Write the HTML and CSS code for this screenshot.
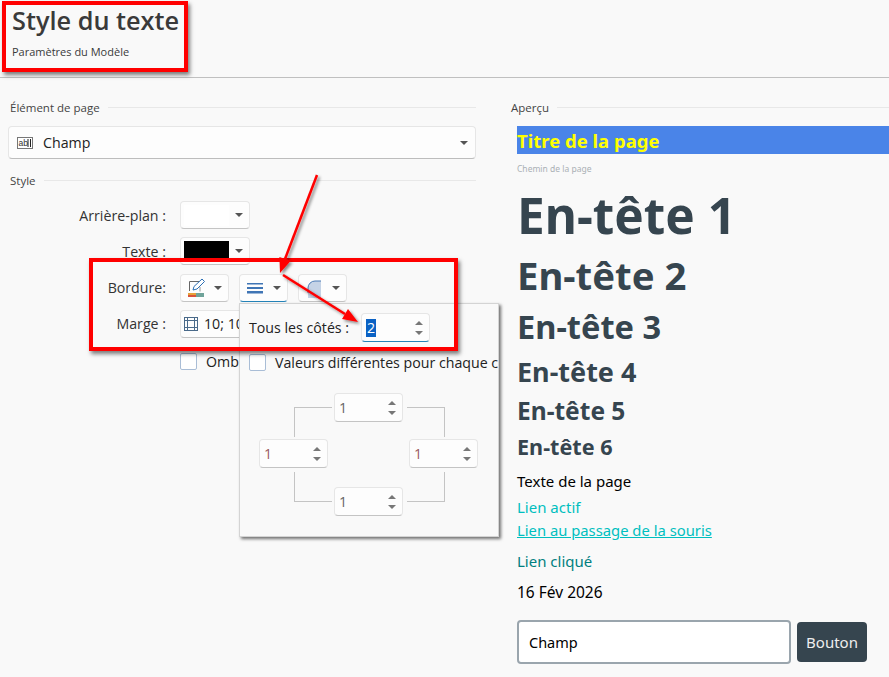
FILE: index.html
```html
<!DOCTYPE html>
<html lang="fr">
<head>
  <meta charset="UTF-8">
  <title>Style du texte</title>
  <link rel="stylesheet" href="styles.css">
</head>
<body>

  <header class="top">
    <h1 class="top-title">Style du texte</h1>
    <div class="top-sub">Paramètres du Modèle</div>
  </header>

  <main class="columns">
    <section class="left">
      <div class="legend"><span>Élément de page</span></div>
      <div class="combo">
        <svg class="abl" width="16" height="12" viewBox="0 0 16 12"><rect x="0.500" y="0.500" width="15" height="11" fill="#fff" stroke="#777"/><text x="1.500" y="9" font-size="8.500" font-family="Liberation Sans" fill="#333">ab</text><path d="M11 2v8M13.500 2v8" stroke="#222" fill="none"/></svg>
        <span class="combo-text">Champ</span>
        <i class="caret"></i>
      </div>

      <div class="legend legend-style"><span>Style</span></div>
      <div class="form">
        <label class="form-label">Arrière-plan :</label>
        <div class="form-row"><div class="btn btn-color"><span class="swatch swatch-white"></span><i class="caret"></i></div></div>

        <label class="form-label">Texte :</label>
        <div class="form-row"><div class="btn btn-color"><span class="swatch swatch-black"></span><i class="caret"></i></div></div>

        <label class="form-label">Bordure:</label>
        <div class="form-row">
          <div class="btn btn-icon">
            <svg width="20" height="20" viewBox="0 0 20 20"><path d="M2.500 13V3.500H13" fill="none" stroke="#666"/><path d="M13 13.500V9" fill="none" stroke="#999"/><path d="M6 12l1-3.500L15 1l2.500 2.500L10 11z" fill="#fff" stroke="#2b6fb5"/><rect x="1" y="15" width="8" height="2" fill="#e8a33a"/><rect x="1" y="17" width="8" height="2" fill="#d9533a"/><rect x="9" y="15" width="8" height="4" fill="#6fa39a"/></svg>
            <i class="caret"></i>
          </div>
          <div class="btn btn-icon btn-active">
            <svg width="18" height="12" viewBox="0 0 18 12"><rect x="1" y="1" width="16" height="1.500" fill="#3f75b5"/><rect x="1" y="5" width="16" height="2" fill="#3f75b5"/><rect x="1" y="9" width="16" height="2.500" fill="#3f75b5"/></svg>
            <i class="caret"></i>
          </div>
          <div class="btn btn-icon">
            <svg width="18" height="20" viewBox="0 0 18 20"><path d="M3 20V10a7 7 0 0 1 7-7h6v17z" fill="#c5d3e6"/><path d="M3 15V10a7 7 0 0 1 7-7h6" fill="none" stroke="#4a7ab5"/></svg>
            <i class="caret"></i>
          </div>
        </div>

        <label class="form-label">Marge :</label>
        <div class="form-row">
          <div class="btn btn-margin">
            <svg width="14" height="14" viewBox="0 0 14 14"><rect x="0.500" y="0.500" width="13" height="13" fill="none" stroke="#4a6a8a"/><path d="M3.500 0v14M10.500 0v14M0 3.500h14M0 10.500h14" stroke="#4a6a8a"/></svg>
            <span>10; 10</span>
          </div>
        </div>

        <div></div>
        <div class="form-row check-row"><span class="check"></span><span>Ombre</span></div>
      </div>
    </section>

    <section class="right">
      <div class="legend legend-right"><span>Aperçu</span></div>
      <div class="preview">
        <div class="pv-title">Titre de la page</div>
        <div class="pv-path">Chemin de la page</div>
        <div class="pv-h pv-h1">En-tête 1</div>
        <div class="pv-h pv-h2">En-tête 2</div>
        <div class="pv-h pv-h3">En-tête 3</div>
        <div class="pv-h pv-h4">En-tête 4</div>
        <div class="pv-h pv-h5">En-tête 5</div>
        <div class="pv-h pv-h6">En-tête 6</div>
        <div class="pv-text">Texte de la page</div>
        <div class="pv-link">Lien actif</div>
        <div class="pv-link pv-hover">Lien au passage de la souris</div>
        <div class="pv-visited">Lien cliqué</div>
        <div class="pv-date">16 Fév 2026</div>
        <div class="pv-form">
          <div class="pv-input">Champ</div>
          <div class="pv-button">Bouton</div>
        </div>
      </div>
    </section>
  </main>

  <!-- popup du bouton bordure -->
  <div class="popup">
    <div class="popup-row">
      <span>Tous les côtés :</span>
      <div class="spin spin-main"><span class="spin-value"><span class="selected">2</span></span><i class="arrows"></i></div>
    </div>
    <div class="popup-check"><span class="check"></span><span class="popup-check-text">Valeurs différentes pour chaque côté</span></div>
    <div class="sides">
      <div class="corner corner-tl"></div>
      <div class="corner corner-tr"></div>
      <div class="corner corner-bl"></div>
      <div class="corner corner-br"></div>
      <div class="spin spin-side side-top"><span class="spin-value">1</span><i class="arrows"></i></div>
      <div class="spin spin-side side-left"><span class="spin-value">1</span><i class="arrows"></i></div>
      <div class="spin spin-side side-right"><span class="spin-value">1</span><i class="arrows"></i></div>
      <div class="spin spin-side side-bottom"><span class="spin-value">1</span><i class="arrows"></i></div>
    </div>
  </div>

  <!-- annotations rouges -->
  <div class="mark mark-title"></div>
  <div class="mark mark-border"></div>
  <svg class="arrows-layer" width="889" height="677" viewBox="0 0 889 677">
    <defs>
      <filter id="sh" x="-20%" y="-20%" width="140%" height="140%"><feDropShadow dx="2" dy="2" stdDeviation="1.500" flood-color="#000" flood-opacity="0.45"/></filter>
    </defs>
    <g filter="url(#sh)" fill="#f00" stroke="#f00">
      <path d="M317 175L285 259" fill="none" stroke-width="2.500"/>
      <path d="M280 273L279.400 257L290.600 261z" stroke="none"/>
      <path d="M283 275L345 314" fill="none" stroke-width="2.500"/>
      <path d="M358 322L342 319L348 309z" stroke="none"/>
    </g>
  </svg>

</body>
</html>
```

FILE: styles.css
```css
html, body {
  margin: 0;
  height: 100%;
}

body {
  position: relative;
  width: 889px;
  height: 677px;
  overflow: hidden;
  background: #f9f9f9;
  color: #222;
  font-family: 'Open Sans', 'Noto Sans', sans-serif;
  font-size: 14.200px;
}

.top {
  height: 78px;
  box-sizing: border-box;
  padding: 3px 0 0 12px;
  border-bottom: 1px solid #c0c0c0;
}

.top-title {
  margin: 0;
  font-size: 25.300px;
  font-weight: 600;
  line-height: 34px;
  color: #3a3a3a;
}

.top-sub {
  margin-top: 7px;
  font-size: 11px;
  line-height: 16px;
  color: #3a3a3a;
}

.columns {
  display: flex;
}

.left {
  width: 476px;
  box-sizing: border-box;
  padding: 20px 0 0 8px;
}

.right {
  flex: 1;
  padding: 20px 0 0 35px;
}

.legend {
  display: flex;
  align-items: center;
  gap: 8px;
  height: 18px;
  padding-left: 2px;
  font-size: 11.500px;
  color: #444;
}

.legend::after {
  content: '';
  flex: 1;
  height: 1px;
  background: #e8e8e8;
}

.legend-style {
  margin-top: 12px;
}

.legend-right {
  padding-left: 0;
}

.combo {
  display: flex;
  align-items: center;
  height: 33px;
  box-sizing: border-box;
  margin-top: 10px;
  padding: 0 7px 0 8px;
  background: #fdfdfd;
  border: 1px solid #e6e6e6;
  border-bottom-color: #bdbdbd;
  border-radius: 4px;
}

.abl {
  margin-right: 10px;
}

.combo-text {
  flex: 1;
}

.caret {
  display: inline-block;
  width: 0;
  height: 0;
  border-left: 4px solid transparent;
  border-right: 4px solid transparent;
  border-top: 4px solid #555;
}

.form {
  display: grid;
  grid-template-columns: 158px 1fr;
  grid-auto-rows: 28px;
  row-gap: 8.300px;
  margin-top: 12px;
  align-items: center;
}

.form-label {
  text-align: right;
  color: #333;
}

.form-row {
  display: flex;
  align-items: center;
  gap: 10px;
  margin-left: 14px;
}

.btn {
  display: flex;
  align-items: center;
  height: 28px;
  box-sizing: border-box;
  background: #fdfdfd;
  border: 1px solid #e6e6e6;
  border-bottom-color: #c4c4c4;
  border-radius: 4px;
}

.btn-color {
  width: 70px;
  padding: 0 6px 0 3px;
  justify-content: space-between;
}

.swatch {
  width: 45px;
  height: 21px;
}

.swatch-white {
  background: #fff;
}

.swatch-black {
  background: #000;
}

.btn-icon {
  width: 49px;
  padding: 0 6px;
  justify-content: space-between;
}

.btn-active {
  border-bottom-color: #2583b8;
}

.btn-margin {
  width: 120px;
  padding: 0 3px;
  gap: 6px;
  white-space: nowrap;
  overflow: hidden;
}

.check-row {
  gap: 9px;
  margin-top: 3px;
}

.check {
  flex: none;
  width: 15px;
  height: 15px;
  background: #fff;
  border: 1px solid #a9bdd6;
  border-radius: 2px;
}

/* apercu */

.preview {
  margin-top: 10px;
  margin-left: 6px;
  font-family: 'Noto Sans', sans-serif;
  font-size: 15px;
  color: #000;
}

.pv-title {
  height: 28px;
  line-height: 29px;
  background: #4a84e8;
  color: #ff0;
  font-size: 18.500px;
  font-weight: bold;
}

.pv-path {
  margin-top: 9px;
  font-size: 8.500px;
  line-height: 11px;
  color: #aab0b5;
}

.pv-h {
  color: #36454f;
  font-weight: bold;
}

.pv-h1 {
  margin-top: 14px;
  font-size: 49.500px;
  line-height: 54px;
}

.pv-h2 {
  margin-top: 12px;
  font-size: 38.300px;
  line-height: 42px;
}

.pv-h3 {
  margin-top: 13px;
  font-size: 32.600px;
  line-height: 36px;
}

.pv-h4 {
  margin-top: 12px;
  font-size: 27px;
  line-height: 30px;
}

.pv-h5 {
  margin-top: 11px;
  font-size: 24.500px;
  line-height: 26px;
}

.pv-h6 {
  margin-top: 11px;
  font-size: 21.600px;
  line-height: 24px;
}

.pv-text {
  margin-top: 12px;
  line-height: 20px;
}

.pv-link {
  margin-top: 6px;
  line-height: 20px;
  color: #00bfbf;
}

.pv-hover {
  margin-top: 3px;
  font-size: 14.800px;
  text-decoration: underline;
}

.pv-visited {
  margin-top: 11px;
  line-height: 20px;
  color: #008080;
}

.pv-date {
  margin-top: 11px;
  font-size: 15.500px;
  line-height: 20px;
}

.pv-form {
  display: flex;
  align-items: center;
  gap: 6px;
  margin-top: 18px;
}

.pv-input {
  width: 274px;
  height: 44px;
  box-sizing: border-box;
  padding-left: 10px;
  line-height: 40px;
  font-size: 14.500px;
  background: #fff;
  border: 2px solid #9aa5ad;
  border-radius: 4px;
}

.pv-button {
  width: 70px;
  height: 40px;
  line-height: 40px;
  font-size: 15px;
  text-align: center;
  background: #36454f;
  color: #eee;
  border-radius: 4px;
}

/* popup */

.popup {
  position: absolute;
  left: 239px;
  top: 303px;
  width: 260px;
  height: 234px;
  box-sizing: border-box;
  padding: 9px 0 0 9px;
  overflow: hidden;
  background: #f9f9f9;
  border: 1px solid #d4d4d4;
  box-shadow: 2px 2px 3px rgba(0, 0, 0, 0.55);
}

.popup-row {
  display: flex;
  align-items: center;
  gap: 12px;
}

.spin {
  display: flex;
  align-items: center;
  justify-content: space-between;
  width: 69px;
  height: 29px;
  box-sizing: border-box;
  padding: 0 6px 0 4px;
  background: #fdfdfd;
  border: 1px solid #e6e6e6;
  border-bottom-color: #c4c4c4;
  border-radius: 4px;
}

.spin-main {
  border-bottom-color: #2583b8;
}

.selected {
  display: inline-block;
  line-height: 18px;
  padding: 0 1px;
  background: #0b62c4;
  color: #fff;
}

.arrows {
  position: relative;
  width: 8px;
  height: 14px;
}

.arrows::before, .arrows::after {
  content: '';
  position: absolute;
  left: 0;
  border-left: 4px solid transparent;
  border-right: 4px solid transparent;
}

.arrows::before {
  top: 0;
  border-bottom: 4px solid #777;
}

.arrows::after {
  bottom: 0;
  border-top: 4px solid #777;
}

.popup-check {
  display: flex;
  align-items: center;
  gap: 9px;
  margin-top: 11px;
  white-space: nowrap;
}

/* schema des quatre cotes */

.sides {
  position: relative;
  width: 220px;
  height: 123px;
  margin: 21px 0 0 10px;
}

.corner {
  position: absolute;
  width: 37px;
  height: 29px;
  border: 0 solid #c4c4c4;
}

.corner-tl {
  left: 35px;
  top: 14px;
  border-width: 1px 0 0 1px;
}

.corner-tr {
  left: 148px;
  top: 14px;
  border-width: 1px 1px 0 0;
}

.corner-bl {
  left: 35px;
  top: 79px;
  border-width: 0 0 1px 1px;
}

.corner-br {
  left: 148px;
  top: 79px;
  border-width: 0 1px 1px 0;
}

.spin-side {
  position: absolute;
  color: #666;
}

.side-top {
  left: 75px;
  top: 0;
}

.side-left {
  left: 0;
  top: 46px;
  color: #9a5a60;
}

.side-right {
  left: 150px;
  top: 46px;
  color: #9a5a60;
}

.side-bottom {
  left: 75px;
  top: 94px;
}

/* annotations */

.mark {
  position: absolute;
  box-sizing: border-box;
  border: 4px solid #f00;
  box-shadow: 2px 3px 4px rgba(0, 0, 0, 0.5);
}

.mark-title {
  left: 2px;
  top: 1px;
  width: 186px;
  height: 71px;
}

.mark-border {
  left: 89px;
  top: 258px;
  width: 369px;
  height: 93px;
}

.arrows-layer {
  position: absolute;
  left: 0;
  top: 0;
  pointer-events: none;
}
```
